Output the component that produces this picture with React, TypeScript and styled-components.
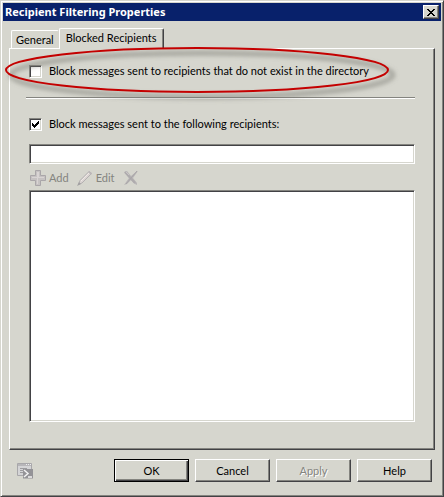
import React, { useState } from "react";
import styled, { createGlobalStyle, css } from "styled-components";

const face = "#d6d6ce";
const shade = "#84847f";
const dark = "#424245";
const navy = "#08216b";

const GlobalStyle = createGlobalStyle`
  * { box-sizing: border-box; }
  body { margin: 0; background: ${face}; }
  body, button, input, textarea {
    font-family: Lato, "Liberation Sans", sans-serif;
    font-size: 11px;
    line-height: 14px;
    color: #000;
  }
`;

const raised = css`
  border: 1px solid;
  border-color: #fff ${dark} ${dark} #fff;
  box-shadow: inset -1px -1px 0 ${shade};
`;

const sunken = css`
  border: 1px solid;
  border-color: ${shade} #fff #fff ${shade};
  box-shadow: inset 1px 1px 0 ${dark}, inset -1px -1px 0 ${face};
  background: #fff;
  border-radius: 0;
  outline: none;
`;

const Dialog = styled.main`
  display: flex;
  flex-direction: column;
  min-height: 100vh;
  padding: 2px;
  background: ${face};
  border: 1px solid;
  border-color: ${face} ${dark} ${dark} ${face};
  box-shadow: inset 1px 1px 0 #fff, inset -1px -1px 0 ${shade};
`;

const TitleBar = styled.header`
  display: flex;
  align-items: center;
  justify-content: space-between;
  height: 18px;
  padding: 0 2px;
  background: ${navy};
`;

const Title = styled.h1`
  margin: 0;
  font: bold 11px/14px "Noto Sans", "DejaVu Sans", sans-serif;
  color: #fff;
  white-space: nowrap;
`;

const CloseButton = styled.button`
  ${raised}
  display: flex;
  align-items: center;
  justify-content: center;
  width: 16px;
  height: 14px;
  padding: 0;
  background: ${face};
`;

const Tabs = styled.div`
  display: flex;
  align-items: flex-end;
  margin: 7px 6px 0 8px;
`;

const Tab = styled.button<{ $active: boolean }>`
  position: relative;
  z-index: ${(p) => (p.$active ? 1 : 0)};
  height: ${(p) => (p.$active ? 21 : 18)}px;
  margin-bottom: ${(p) => (p.$active ? -1 : 0)}px;
  padding: ${(p) => (p.$active ? "0 7px 2px 6px" : "1px 4px 0")};
  background: ${face};
  border: 1px solid;
  border-color: #fff ${(p) => (p.$active ? dark : face)} transparent #fff;
  border-bottom: 0;
  border-radius: 2px 2px 0 0;
  box-shadow: ${(p) => (p.$active ? `inset -1px 0 0 ${shade}` : "none")};
  white-space: nowrap;
`;

const Panel = styled.section`
  ${raised}
  display: flex;
  flex: 1;
  flex-direction: column;
  margin: 0 6px;
  padding: 15px 19px 27px 16px;
`;

const Option = styled.label`
  position: relative;
  display: flex;
  align-items: center;
  align-self: flex-start;
  gap: 7px;
  height: 14px;
  margin-left: 3px;
  white-space: nowrap;
`;

const Box = styled.span`
  position: relative;
  display: flex;
  width: 13px;
  height: 13px;
`;

const Check = styled.input`
  ${sunken}
  appearance: none;
  width: 13px;
  height: 13px;
  margin: 0;
  & + svg { display: none; }
  &:checked + svg { display: block; }
`;

const Tick = styled.svg`
  position: absolute;
  top: 3px;
  left: 3px;
  pointer-events: none;
`;

const Marker = styled.svg`
  position: absolute;
  top: -21px;
  left: -27px;
  z-index: 2;
  pointer-events: none;
`;

const Divider = styled.hr`
  width: 100%;
  height: 2px;
  margin: 19px 0 18px;
  border: 0;
  border-top: 1px solid ${shade};
  border-bottom: 1px solid #fff;
`;

const Entry = styled.input`
  ${sunken}
  height: 20px;
  margin: 13px 0 0 3px;
  padding: 2px 4px;
`;

const Toolbar = styled.div`
  display: flex;
  align-items: center;
  height: 26px;
  padding: 2px 0 0 4px;
  gap: 8px;
`;

const Tool = styled.button`
  display: flex;
  align-items: center;
  gap: 3px;
  height: 18px;
  padding: 0;
  border: 0;
  background: transparent;
  color: ${shade};
`;

const List = styled.textarea`
  ${sunken}
  flex: 1;
  min-height: 60px;
  margin-left: 3px;
  padding: 4px;
  resize: none;
`;

const Footer = styled.footer`
  display: flex;
  align-items: center;
  justify-content: space-between;
  padding: 9px 9px 12px 14px;
`;

const Actions = styled.div`
  display: flex;
  gap: 6px;
`;

const IconButton = styled.button`
  display: flex;
  padding: 0;
  border: 0;
  background: transparent;
`;

const Action = styled.button<{ $primary?: boolean }>`
  ${raised}
  width: 75px;
  height: 23px;
  padding: 0;
  background: ${face};
  ${(p) =>
    p.$primary &&
    css`
      border-color: #000;
      box-shadow: inset 1px 1px 0 #fff, inset -1px -1px 0 ${dark}, inset -2px -2px 0 ${shade};
    `}
  &:disabled {
    color: ${shade};
    text-shadow: 1px 1px 0 #fff;
  }
`;

function CheckOption({ label, checked, onChange, children }: {
  label: string;
  checked: boolean;
  onChange: (value: boolean) => void;
  children?: React.ReactNode;
}) {
  return (
    <Option>
      <Box>
        <Check type="checkbox" checked={checked} onChange={(e) => onChange(e.target.checked)} />
        <Tick width="7" height="7" viewBox="0 0 7 7" shapeRendering="crispEdges" aria-hidden="true">
          <path d="M0 2h1v1h1v1h1v-1h1v-1h1v-1h1v-1h1v3h-1v1h-1v1h-1v1h-1v1h-1v-1h-1v-1h-1z" />
        </Tick>
      </Box>
      {label}
      {children}
    </Option>
  );
}

const Highlight = () => (
  <Marker width="402" height="64" viewBox="0 0 402 64" aria-hidden="true">
    <defs>
      <filter id="soft" x="-5%" y="-20%" width="110%" height="150%">
        <feGaussianBlur stdDeviation="2" />
      </filter>
    </defs>
    <ellipse cx="200" cy="32" rx="191" ry="22" fill="none" stroke="#77776f" strokeOpacity=".5" strokeWidth="5" filter="url(#soft)" />
    <ellipse cx="195" cy="27" rx="191" ry="22" fill="none" stroke="#c40000" strokeWidth="2" />
  </Marker>
);

const AddIcon = () => (
  <svg width="16" height="16" viewBox="0 0 16 16" aria-hidden="true">
    <path d="M5.5.5h5v5h5v5h-5v5h-5v-5h-5v-5h5z" fill="#c6c2c2" stroke="#aaa6a9" />
    <path d="M7 2h2v5h5v1H8v6H7V8H2V7h5z" fill="#d9d4d4" />
  </svg>
);

const EditIcon = () => (
  <svg width="16" height="16" viewBox="0 0 16 16" aria-hidden="true">
    <path d="M1.500 14.500l1.500-4L12 1.500l2.500 2L5 13z" fill="#dcd5d3" stroke="#b3b0b1" />
    <path d="M4 11l8-8" stroke="#efe9e6" />
    <path d="M0 16l2-4 2 2z" fill="#a19fa1" />
    <path d="M12 1l3 2-1 2-3-3z" fill="#bcb7b9" />
  </svg>
);

const DeleteIcon = () => (
  <svg width="16" height="16" viewBox="0 0 16 16" aria-hidden="true">
    <path d="M1 2l3-1 4 5 5-4 2-1-5 7 4 5v2l-2-1-4-4-4 4-3 1 5-7z" fill="#b8b5b6" />
    <path d="M2 2l10 11" stroke="#aeabad" strokeWidth="2" />
    <path d="M14 1L3 14" stroke="#a9a6a8" />
    <path d="M3 2l3 3" stroke="#c9c5c6" />
  </svg>
);

const ScriptIcon = () => (
  <svg width="16" height="16" viewBox="0 0 16 16" aria-hidden="true">
    <path d="M.5.500h14v12H.5z" fill="#d4d4d6" stroke="#a8a7aa" />
    <path d="M1 1h13v2H1z" fill="#b7b6b9" />
    <path d="M9 1.500h1M11 1.500h1M13 1.500h1" stroke="#eeeeef" />
    <path d="M3 5.500h7M3 7.500h4M3 9.500h3" stroke="#9c9b9e" />
    <path d="M6 6h10v9.500H6z" fill="#949397" />
    <path d="M7 7l4 3.500L7 14M11 14h4" fill="none" stroke="#f2f2f2" strokeWidth="1.500" />
  </svg>
);

export default function App() {
  const [tab, setTab] = useState("Blocked Recipients");
  const [unknown, setUnknown] = useState(false);
  const [listed, setListed] = useState(true);

  return (
    <>
      <GlobalStyle />
      <Dialog>
        <TitleBar>
          <Title>Recipient Filtering Properties</Title>
          <CloseButton aria-label="Close">
            <svg width="8" height="7" viewBox="0 0 8 7" shapeRendering="crispEdges" aria-hidden="true">
              <path d="M0 0h2v1h1v1h2V1h1V0h2v1H7v1H6v1H5v1h1v1h1v1h1v1H6V6H5V5H3v1H2v1H0V6h1V5h1V4h1V3H2V2H1V1H0z" />
            </svg>
          </CloseButton>
        </TitleBar>
        <Tabs role="tablist">
          {["General", "Blocked Recipients"].map((name) => (
            <Tab key={name} role="tab" aria-selected={tab === name} $active={tab === name} onClick={() => setTab(name)}>
              {name}
            </Tab>
          ))}
        </Tabs>
        <Panel role="tabpanel" aria-label={tab}>
          <CheckOption
            label="Block messages sent to recipients that do not exist in the directory"
            checked={unknown}
            onChange={setUnknown}
          >
            <Highlight />
          </CheckOption>
          <Divider />
          <CheckOption label="Block messages sent to the following recipients:" checked={listed} onChange={setListed} />
          <Entry type="text" aria-label="Recipient address" />
          <Toolbar>
            <Tool disabled><AddIcon />Add</Tool>
            <Tool disabled><EditIcon />Edit</Tool>
            <Tool disabled aria-label="Remove"><DeleteIcon /></Tool>
          </Toolbar>
          <List aria-label="Blocked recipients" />
        </Panel>
        <Footer>
          <IconButton aria-label="Show command"><ScriptIcon /></IconButton>
          <Actions>
            <Action $primary>OK</Action>
            <Action>Cancel</Action>
            <Action disabled>Apply</Action>
            <Action>Help</Action>
          </Actions>
        </Footer>
      </Dialog>
    </>
  );
}
